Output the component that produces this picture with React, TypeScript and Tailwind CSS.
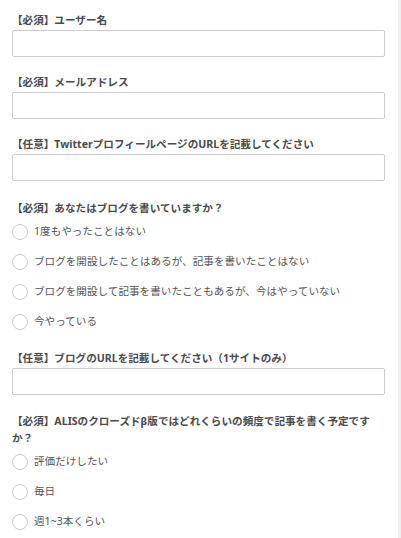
import React from "react";

const font = { fontFamily: '"Noto Sans", "Noto Sans CJK JP", sans-serif' };

function Label({ children, className = "" }: { children: React.ReactNode; className?: string }) {
  return (
    <div className={`text-[10.6px] leading-[17px] font-bold text-[#4a4a4a] ${className}`}>{children}</div>
  );
}

function TextField({ label, className = "" }: { label: string; className?: string }) {
  return (
    <div className={className}>
      <Label className="mb-[1px]">{label}</Label>
      <div className="h-[27px] border border-[#cccccc] rounded-[2px] bg-white" />
    </div>
  );
}

function Radio({ text }: { text: string }) {
  return (
    <div className="h-[30px] flex items-center">
      <span className="w-[16px] h-[16px] rounded-full border-[1.5px] border-[#cccccc] bg-white shrink-0" />
      <span className="ml-[6px] text-[10.6px] text-[#555]">{text}</span>
    </div>
  );
}

function RadioGroup({ label, options, className = "" }: { label: string; options: string[]; className?: string }) {
  return (
    <div className={className}>
      <Label>{label}</Label>
      <div className="flex flex-col">
        {options.map((o) => (
          <Radio key={o} text={o} />
        ))}
      </div>
    </div>
  );
}

export default function App() {
  return (
    <div className="w-[401px] h-[538px] overflow-hidden flex bg-white" style={font}>
      <div className="flex-1 pl-[12px] pr-[13px] pt-[12px]">
        <TextField label="【必須】ユーザー名" />
        <TextField label="【必須】メールアドレス" className="mt-[17px]" />
        <TextField label="【任意】TwitterプロフィールページのURLを記載してください" className="mt-[17px]" />
        <RadioGroup
          className="mt-[19px]"
          label="【必須】あなたはブログを書いていますか？"
          options={[
            "1度もやったことはない",
            "ブログを開設したことはあるが、記事を書いたことはない",
            "ブログを開設して記事を書いたこともあるが、今はやっていない",
            "今やっている",
          ]}
        />
        <TextField label="【任意】ブログのURLを記載してください（1サイトのみ）" className="mt-[13px]" />
        <RadioGroup
          className="mt-[18px]"
          label="【必須】ALISのクローズドβ版ではどれくらいの頻度で記事を書く予定ですか？"
          options={["評価だけしたい", "毎日", "週1~3本くらい"]}
        />
      </div>
      <div className="w-[3px] h-full bg-[#efefef]" />
    </div>
  );
}
